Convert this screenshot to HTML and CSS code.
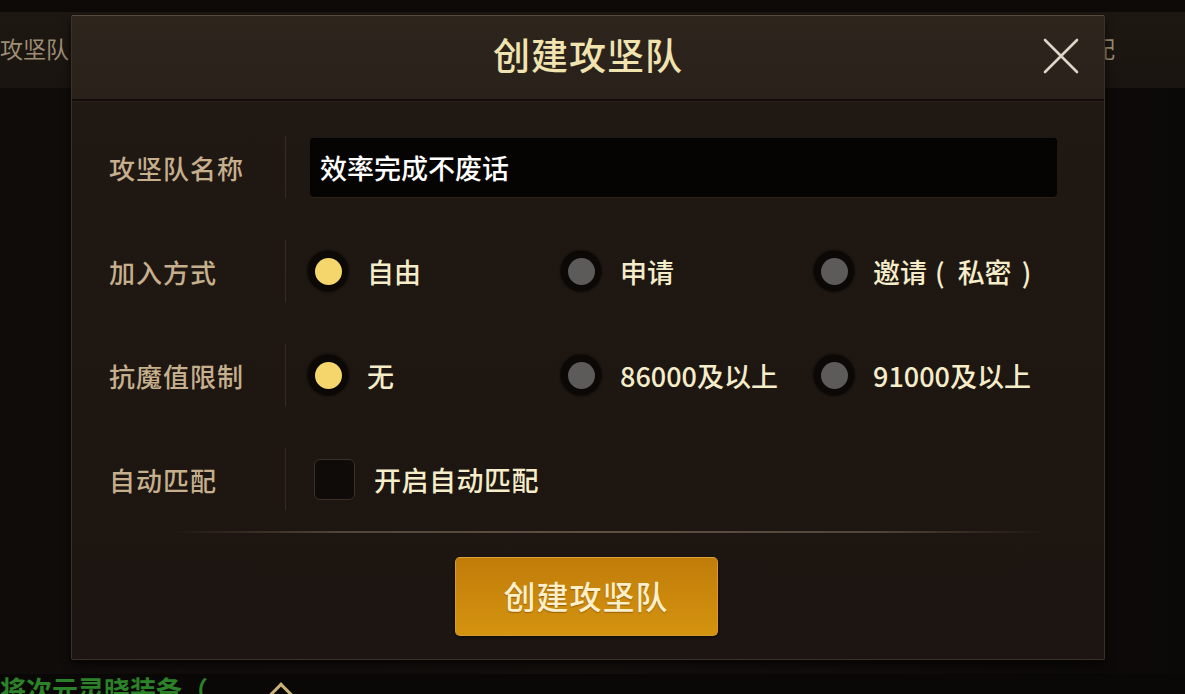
FILE: index.html
```html
<!DOCTYPE html>
<html lang="zh-CN">
<head>
<meta charset="utf-8">
<title>创建攻坚队</title>
<link rel="stylesheet" href="styles.css">
</head>
<body>
<div class="page">
  <div class="bg-top">
    <span class="bg-tab">攻坚队</span>
    <span class="bg-tab bg-tab-right">匹配</span>
  </div>
  <div class="bg-middle"></div>
  <div class="bg-bottom">
    <span class="bg-green">将次元灵晓装备（</span>
    <span class="bg-arrow"></span>
  </div>
</div>

<div class="dialog">
  <div class="dialog-header">
    <span></span>
    <h1 class="dialog-title">创建攻坚队</h1>
    <button class="close-btn" aria-label="关闭">
      <svg width="36" height="36" viewBox="0 0 36 36">
        <path d="M2 2 L34 34 M34 2 L2 34" stroke="#dcd5c8" stroke-width="2.6" stroke-linecap="round" fill="none"/>
      </svg>
    </button>
  </div>
  <div class="dialog-body">
    <div class="form-row">
      <div class="label">攻坚队名称</div>
      <div class="field">
        <div class="text-input">效率完成不废话</div>
      </div>
    </div>
    <div class="form-row">
      <div class="label">加入方式</div>
      <div class="field options">
        <div class="option"><span class="radio on"></span><span class="opt-text">自由</span></div>
        <div class="option"><span class="radio"></span><span class="opt-text">申请</span></div>
        <div class="option"><span class="radio"></span><span class="opt-text">邀请<span class="paren">(</span>私密<span class="paren paren-r">)</span></span></div>
      </div>
    </div>
    <div class="form-row">
      <div class="label">抗魔值限制</div>
      <div class="field options">
        <div class="option"><span class="radio on"></span><span class="opt-text">无</span></div>
        <div class="option"><span class="radio"></span><span class="opt-text">86000及以上</span></div>
        <div class="option"><span class="radio"></span><span class="opt-text">91000及以上</span></div>
      </div>
    </div>
    <div class="form-row">
      <div class="label">自动匹配</div>
      <div class="field">
        <div class="option"><span class="checkbox"></span><span class="opt-text check-text">开启自动匹配</span></div>
      </div>
    </div>
    <div class="separator"></div>
    <div class="actions">
      <button class="primary-btn">创建攻坚队</button>
    </div>
  </div>
</div>
</body>
</html>
```

FILE: styles.css
```css
* { box-sizing: border-box; }

html, body {
  margin: 0;
  padding: 0;
}

body {
  width: 1185px;
  height: 694px;
  overflow: hidden;
  position: relative;
  background: #0d0a08;
  font-family: "Noto Sans CJK SC", "Noto Sans", sans-serif;
}

.page {
  height: 694px;
  display: flex;
  flex-direction: column;
}

.bg-top {
  margin-top: 12px;
  height: 76px;
  background: linear-gradient(#1e1813, #19140f);
  display: flex;
  justify-content: space-between;
  align-items: center;
  padding-bottom: 4px;
}

.bg-tab {
  font-size: 23px;
  color: #9d8d74;
  line-height: 1;
}

.bg-tab-right {
  margin-right: 70px;
}

.bg-middle {
  flex: 1;
  background: linear-gradient(90deg, #0f0c0a, #130f0c 50%, #0b0908);
}

.bg-bottom {
  height: 20px;
  overflow: hidden;
  display: flex;
  align-items: flex-start;
  background: #0a0806;
}

.bg-green {
  font-size: 26px;
  line-height: 26px;
  margin-top: 2px;
  color: #2b8228;
  font-weight: 700;
  width: 270px;
  white-space: nowrap;
}

.bg-arrow {
  width: 18px;
  height: 18px;
  margin-top: 12px;
  margin-left: 2px;
  border-left: 3px solid #c9b27a;
  border-top: 3px solid #c9b27a;
  transform: rotate(45deg);
}

/* Dialog */
.dialog {
  position: absolute;
  left: 71px;
  top: 15px;
  width: 1034px;
  height: 645px;
  background: linear-gradient(180deg, #211913, #1d1611 60%, #1c1511);
  border: 1px solid #3a3026;
  border-top-color: #564a3c;
  border-radius: 2px;
  box-shadow: 0 4px 10px rgba(0, 0, 0, 0.7);
  display: flex;
  flex-direction: column;
}

.dialog-header {
  height: 85px;
  flex: none;
  display: grid;
  grid-template-columns: 1fr auto 1fr;
  align-items: center;
  background: linear-gradient(180deg, #2e251d, #29211a);
  border-bottom: 2px solid #120d0a;
  box-shadow: 0 1px 0 #2c241c;
}

.dialog-title {
  margin: 0;
  font-size: 37px;
  font-weight: 500;
  letter-spacing: 1px;
  color: #f1e3b0;
  line-height: 1;
  padding-bottom: 6px;
}

.close-btn {
  justify-self: end;
  margin-right: 25px;
  width: 36px;
  height: 36px;
  padding: 0;
  border: 0;
  background: none;
  display: flex;
  margin-bottom: 4px;
}

.dialog-body {
  padding: 14px 47px 0 37px;
  display: flex;
  flex-direction: column;
}

.form-row {
  height: 104px;
  display: grid;
  grid-template-columns: 177px 1fr;
  align-items: center;
}

.label {
  height: 62px;
  display: flex;
  align-items: center;
  border-right: 1px solid #362b22;
  font-size: 26px;
  font-weight: 500;
  color: #c6af8d;
  letter-spacing: 1px;
}

.field {
  padding-left: 24px;
}

.text-input {
  height: 59px;
  background: #050403;
  border-radius: 4px;
  box-shadow: inset 0 1px 0 #000, 0 1px 0 #2a221b;
  display: flex;
  align-items: center;
  padding-left: 10px;
  font-size: 27px;
  color: #ffffff;
  font-weight: 500;
}

.options {
  display: grid;
  grid-template-columns: 253px 253px 1fr;
}

.option {
  display: flex;
  align-items: center;
}

.radio {
  width: 40px;
  height: 40px;
  margin-left: -2px;
  border-radius: 50%;
  background: #0b0806;
  box-shadow: 0 0 2px 1px rgba(0, 0, 0, 0.6);
  display: flex;
  align-items: center;
  justify-content: center;
  margin-right: 19px;
}

.radio::after {
  content: "";
  width: 27px;
  height: 27px;
  border-radius: 50%;
  background: #5d5b59;
}

.radio.on::after {
  background: #f4d66d;
}

.opt-text {
  font-size: 27px;
  font-weight: 500;
  color: #f5ecc9;
  white-space: nowrap;
}

.paren {
  display: inline-block;
  margin: 0 13px 0 8px;
}

.paren-r {
  margin: 0 0 0 10px;
}

.checkbox {
  width: 41px;
  height: 41px;
  margin-left: 4px;
  margin-right: 19px;
  border-radius: 6px;
  background: #0e0b09;
  border: 1px solid #3a3027;
}

.check-text {
  letter-spacing: 0.5px;
}

.separator {
  height: 2px;
  margin: 0 10px 0 60px;
  background: linear-gradient(90deg, rgba(90, 76, 61, 0), #52463a 20%, #5e5142 50%, #52463a 80%, rgba(90, 76, 61, 0));
}

.actions {
  display: flex;
  justify-content: center;
  padding-top: 24px;
  padding-left: 6px;
}

.primary-btn {
  width: 263px;
  height: 79px;
  border: 1px solid #d89b2a;
  border-top-color: #dca43a;
  border-radius: 5px;
  background: linear-gradient(180deg, #c07c09, #cb880d 50%, #d4930f);
  box-shadow: 0 1px 3px rgba(0, 0, 0, 0.6);
  font-family: "Noto Sans CJK SC", "Noto Sans", sans-serif;
  font-size: 32px;
  font-weight: 500;
  color: #fcefc9;
  text-shadow: 0 1px 1px rgba(90, 50, 0, 0.5);
  letter-spacing: 1px;
  padding: 0 0 4px;
}
```
